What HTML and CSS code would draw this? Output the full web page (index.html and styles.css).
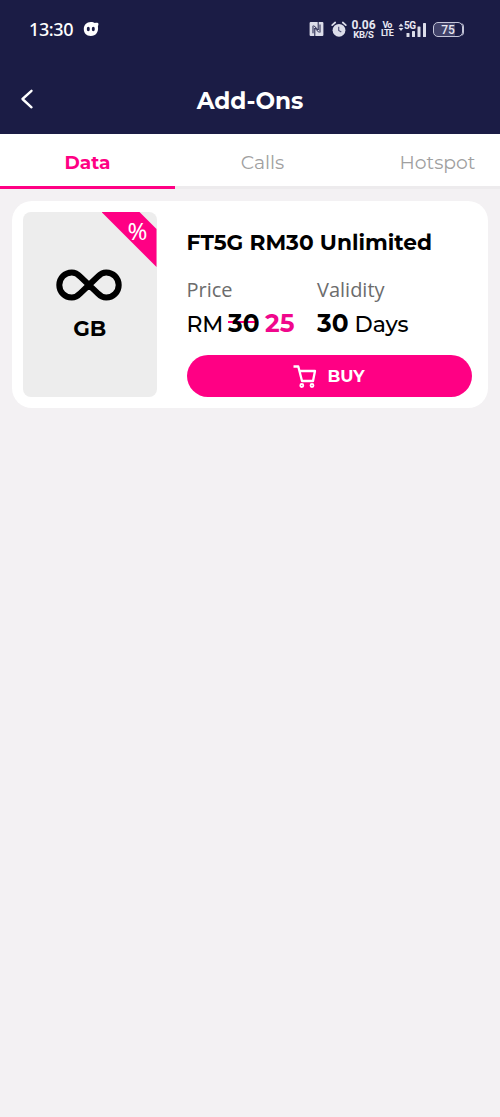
FILE: index.html
```html
<!DOCTYPE html>
<html lang="en">
<head>
<meta charset="utf-8">
<title>Add-Ons</title>
<link rel="stylesheet" href="styles.css">
</head>
<body>
<header class="header">
  <div class="status">
    <span class="clock">13:30</span>
    <svg class="face" width="17" height="16" viewBox="0 0 17 16"><path d="M7.800 1C9.500 1 11 1.500 12 2.100C13.500 1.600 15.500 1.800 15.500 3C15.500 4 15 4.700 14.900 5.500C15.800 10.800 13 15 7.800 15C3.200 15 .8 12 .8 8S3.600 1 7.800 1Z" fill="#fff"/><ellipse cx="5.300" cy="8" rx="1.500" ry="2.200" fill="#1b1c45"/><ellipse cx="10.300" cy="8" rx="1.500" ry="2.200" fill="#1b1c45"/></svg>
    <div class="indicators">
      <svg class="nfc" width="15" height="16" viewBox="0 0 15 16" fill="none"><rect x=".6" y="1" width="13.800" height="14" rx="1" fill="#dcdde9"/><path d="M4 12.300V4.800M5.800 15V7L10 11.500M4.800 4.500L9.200 9V1M11 3.500V11.500" stroke="#1b1c45" stroke-width="1"/></svg>
      <svg class="alarm" width="16" height="17" viewBox="0 0 16 17"><circle cx="8" cy="9.300" r="6.400" fill="#dcdde9"/><path d="M1.200 4.200L4.200 1.500M14.800 4.200L11.800 1.500" stroke="#dcdde9" stroke-width="1.700" stroke-linecap="round"/><path d="M7.700 5.800V9.500L10.300 11" fill="none" stroke="#55567c" stroke-width="1.200"/></svg>
      <div class="stack speed"><span class="rate">0.06</span><span class="unit">KB/S</span></div>
      <div class="stack volte"><span>Vo</span><span>LTE</span></div>
      <div class="signal">
        <span class="gen">5G</span>
        <svg width="29" height="17" viewBox="0 0 29 17" fill="#dcdde9"><path d="M.5 5.500L3 2.500L5.500 5.500ZM.5 7H5.500L3 10Z"/><rect x="8.500" y="12" width="3" height="4" rx=".6"/><rect x="14" y="10" width="3" height="6" rx=".6"/><rect x="19.500" y="5.500" width="3" height="10.500" rx=".6"/><rect x="25" y="2" width="3" height="14" rx=".6"/></svg>
      </div>
      <div class="battery">75</div>
    </div>
  </div>
  <div class="bar">
    <svg class="back" width="14" height="22" viewBox="0 0 14 22"><path d="M11.500 2.800L2.500 11L11.500 19.300" fill="none" stroke="#fff" stroke-width="2.400" stroke-linecap="round" stroke-linejoin="round"/></svg>
    <h1 class="title">Add-Ons</h1>
  </div>
</header>
<nav class="tabs">
  <span class="tab active"><span>Data</span></span>
  <span class="tab"><span>Calls</span></span>
  <span class="tab"><span>Hotspot</span></span>
</nav>
<main class="card">
  <div class="tile">
    <svg class="infinity" width="66" height="34" viewBox="0 0 66 34"><path d="M33 17L24.500 25.200C21.500 28.300 18.500 29.600 15.800 29.600C8.800 29.600 3.300 24 3.300 17S8.800 4.400 15.800 4.400C18.500 4.400 21.500 5.700 24.500 8.800L41.500 25.200C44.500 28.300 47.500 29.600 50.200 29.600C57.200 29.600 62.700 24 62.700 17S57.200 4.400 50.200 4.400C47.500 4.400 44.500 5.700 41.500 8.800Z" fill="none" stroke="#000" stroke-width="6"/></svg>
    <span class="gb">GB</span>
    <div class="ribbon"><span>%</span></div>
  </div>
  <div class="details">
    <h2 class="name">FT5G RM30 Unlimited</h2>
    <div class="facts">
      <div class="fact">
        <span class="label">Price</span>
        <span class="value"><span class="rm">RM</span><b class="old">30</b><b class="new">25</b></span>
      </div>
      <div class="fact">
        <span class="label">Validity</span>
        <span class="value"><b class="count">30</b><span>Days</span></span>
      </div>
    </div>
    <button class="buy">
      <svg width="24" height="23" viewBox="0 0 24 23" fill="none" stroke="#fff" stroke-width="2.300" stroke-linejoin="round"><path d="M.5 1.500H5.300L9 16H20L22 6H6.500"/><circle cx="8.800" cy="20.500" r="1.500" stroke-width="1.800"/><circle cx="19" cy="20.500" r="1.500" stroke-width="1.800"/></svg>
      <span>BUY</span>
    </button>
  </div>
</main>
</body>
</html>
```
FILE: styles.css
```css
* { box-sizing: border-box; }
body {
  margin: 0;
  min-height: 1117px;
  background: #f3f1f3;
  color: #000;
  font-family: Montserrat, Inter, sans-serif;
}
.header { height: 134px; background: #1b1c45; color: #fff; }
.status { display: flex; align-items: center; height: 58px; padding: 0 37px 0 29px; }
.clock { width: 44px; font: 500 18px/20px "Noto Sans", sans-serif; letter-spacing: -.4px; }
.face { margin-left: 10px; }
.indicators { display: flex; align-items: center; margin-left: auto; color: #e8e8f2; }
.nfc { margin-right: 7px; }
.alarm { margin-right: 4px; }
.stack { display: flex; flex-direction: column; align-items: center; font-family: Roboto, sans-serif; font-weight: 700; }
.speed { width: 25px; margin-right: 5px; }
.rate { font-size: 12px; line-height: 10px; }
.unit { font-size: 9.500px; line-height: 9px; letter-spacing: -.3px; }
.volte { width: 12px; margin-right: 5px; font-size: 9px; line-height: 8.500px; letter-spacing: -.9px; }
.signal { display: grid; width: 29px; margin-right: 6px; }
.signal > * { grid-area: 1 / 1; }
.gen { padding-left: 6px; font: 700 10px/9px Roboto, sans-serif; letter-spacing: -.5px; }
.battery {
  width: 30px;
  height: 15px;
  border: 1px solid #c4c5d8;
  border-radius: 5px;
  background: linear-gradient(90deg, #414269 75%, #1b1c45 75%);
  box-shadow: 2px 0 0 -1px #c4c5d8;
  font: 500 12px/14px Roboto, sans-serif;
  text-align: center;
}
.bar { display: grid; grid-template-columns: 20px 1fr 20px; align-items: center; height: 76px; padding: 9px 20px 0; }
.back { margin-top: -4px; }
.title { margin: 0; font-size: 23.200px; line-height: 28px; font-weight: 700; text-align: center; }
.tabs { display: grid; grid-template-columns: repeat(3, 175px); height: 55px; overflow: hidden; background: #fff; color: #a0a0a0; }
.tab { display: flex; align-items: center; justify-content: center; border-bottom: 3px solid #edebed; padding-top: 4px; font-size: 18.800px; font-weight: 400; }
.active { color: #ff0084; border-color: #ff0084; font-size: 18.500px; font-weight: 700; }
.card { display: flex; margin: 12px 12px 0; height: 207px; padding: 11px; border-radius: 20px; background: #fff; }
.tile {
  position: relative;
  display: flex;
  flex-direction: column;
  align-items: center;
  width: 133.500px;
  height: 185px;
  padding-top: 56px;
  border-radius: 8px;
  background: #ededed;
}
.infinity { margin: 0 2px 0 0; }
.gb { margin-top: 13px; font-size: 21.500px; line-height: 26px; font-weight: 700; }
.ribbon {
  position: absolute;
  top: 0;
  right: 0;
  width: 55px;
  height: 55px;
  padding: 4px 0 0 26px;
  background: #ff0084;
  clip-path: polygon(0 0, 38px 0, 55px 17px, 55px 55px);
  color: #fff;
  font: 400 24px/29px "Noto Sans", sans-serif;
}
.details { width: 286px; margin-left: 30px; padding-top: 16px; }
.name { margin: 0; font-size: 21.700px; line-height: 28px; font-weight: 700; white-space: nowrap; }
.facts { display: grid; grid-template-columns: 130.500px 1fr; margin-top: 20px; }
.fact { display: flex; flex-direction: column; }
.label { font: 400 20px/28px "Open Sans", sans-serif; color: #6c6c6c; }
.value { display: flex; align-items: baseline; height: 32px; margin-top: 3px; font-size: 22px; line-height: 32px; font-weight: 500; }
.value b { font-size: 24.800px; font-weight: 700; }
.rm { width: 41.500px; letter-spacing: -.3px; }
.old { width: 37px; background: linear-gradient(#ff0084, #ff0084) 0 14px / 27px 2px no-repeat; }
.new { color: #f0078c; }
.count { width: 37.500px; }
.buy {
  display: flex;
  align-items: center;
  justify-content: center;
  gap: 10px;
  width: 285px;
  height: 42px;
  margin: 16px 0 0;
  padding: 0;
  border: 0;
  border-radius: 21px;
  background: #ff0084;
  color: #fff;
  font: 700 16.800px/20px Montserrat, Inter, sans-serif;
}
```
